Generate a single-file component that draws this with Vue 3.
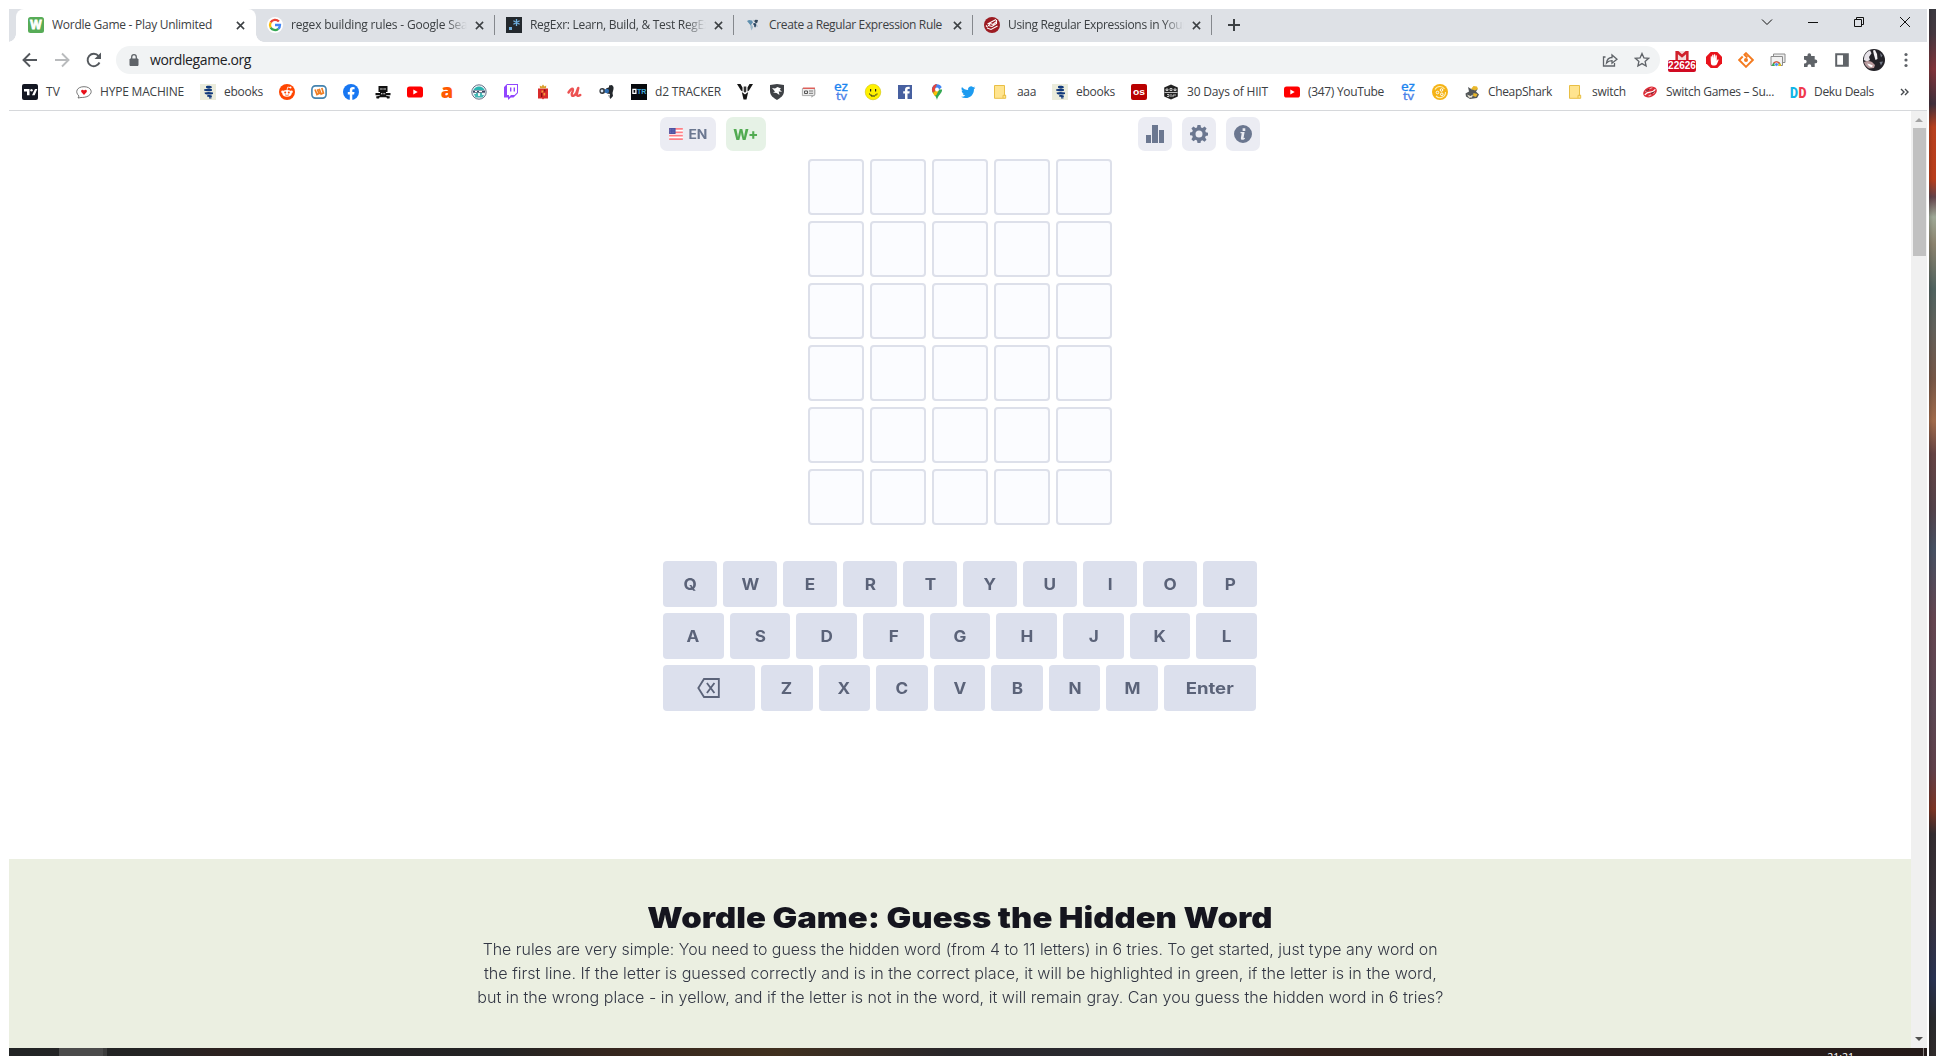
<script setup>
// Adjusts tracking so that a label takes a given width
const vFit = (el, { value }) => {
  el.style.letterSpacing = '0px'
  const n = el.textContent.trim().length
  const gap = (value - el.getBoundingClientRect().width) / n
  el.style.letterSpacing = gap.toFixed(3) + 'px'
}
// Widens the letterforms around their centre to a given width
const vStretch = (el, { value }) => {
  el.style.transform = 'none'
  el.style.transform = `scaleX(${(value / el.getBoundingClientRect().width).toFixed(4)})`
}

const sans = 'font-family="Liberation Sans, sans-serif"'
const youtube = '<rect y="2.6" width="16" height="11" rx="2.6" fill="#f00"/><path d="M6.3 5.6v5l4.4-2.5z" fill="#fff"/>'
const eztv = '<g font-family="Noto Sans, sans-serif"><text x="1" y="7.300" font-size="12.500" fill="#1a84f0" stroke="#1a84f0" stroke-width=".3" textLength="14" lengthAdjust="spacingAndGlyphs">ez</text><text x="3" y="15.800" font-size="11" fill="#4a80e8" stroke="#4a80e8" stroke-width=".3" textLength="11" lengthAdjust="spacingAndGlyphs">tv</text></g>'
const ebooks = '<path fill="#ebecdc" d="M0 0h16v16H0z"/><path d="M6 2.2c4-1 7 .3 5.500 1.700-1.500.7-4 .6-5.500-.1zM4 5.500c2.500-1 5-.8 8-.3v1.600c-3 .8-6 .7-8-.2zM4.500 8.500c3-.9 6-.7 8.500.1v1.400c-3 .8-6 .7-8-.1zM7 11.500c2-.7 4-.4 5 .2v1c-2 .5-4 .4-5-.1zM9 13.300h2.500v1.300H9z" fill="#123a7c"/>'
const folder = '<path d="M1.500 1.500h10v9.800h1.200v3h-11.200z" fill="#ffe48f" stroke="#e9bf45" stroke-width="1"/><path d="M10 14v-2.700h2.500" fill="none" stroke="#e9bf45"/>'

const icons = {
  wordle: `<rect width="16" height="16" rx="2.500" fill="#57ac57"/><text x="8" y="12.300" ${sans} font-size="12" font-weight="700" text-anchor="middle" fill="#fff" stroke="#fff" stroke-width=".8">W</text>`,
  google: '<circle cx="8" cy="8" r="8" fill="#fff"/><g fill="none" stroke-width="2.300"><path d="M11.900 4.600A5 5 0 0 0 3.700 5.400" stroke="#ea4335"/><path d="M3.700 5.400a5.200 5.200 0 0 0 0 5.200" stroke="#fbbc05"/><path d="M3.700 10.600a5 5 0 0 0 7.600 1.200" stroke="#34a853"/><path d="M11.300 11.800A5 5 0 0 0 13 8H8" stroke="#4285f4"/></g>',
  regexr: `<path d="M0 0h16v16H0z" fill="#23282d"/><rect x="3" y="10" width="3" height="3" fill="#70b0e0"/><path d="M10.500 2v7M7.400 3.700l6.200 3.600M13.600 3.700L7.400 7.300" stroke="#70b0e0" stroke-width="1.300"/>`,
  map: '<path d="M2 4l2-1 3 .5 1 2-1.500 1.500-.5 2-1.500-2z" fill="#5f8fae"/><path d="M5.500 8l2 .5.5 2-1.500 3-1-3z" fill="#9db8c8"/><path d="M7.500 3.200l1.500-.4-.6 1.400z" fill="#9db8c8"/><path d="M9 4l1.500-1.200 2.500.2-.6 2.500-1.400 1z" fill="#31475b"/><path d="M8.600 6l2 .3.900 1.600-1.200 2.600-1-.6-.2-1.700-1-1z" fill="#2d4a66"/><path d="M11.500 9l1-.5-.3 1.500z" fill="#5f8fae"/>',
  cisco: '<circle cx="8" cy="8" r="8" fill="#9c1b22"/><path d="M3.500 7l8.500-4.500M4.500 8.800L6 6.500l3 1 4-3.500M12.500 3v3.500L8 9.500 4 8.500M3 11l4 1.500L13.500 9M2 8.500l1.500 1.500" fill="none" stroke="#fff" stroke-width="1.100"/>',
  tv: '<rect width="16" height="16" rx="2" fill="#131722"/><path d="M2 5h5.500v6.200H5V7.500H2zM13 5h2.300l-2.600 6.200H10z" fill="#fff"/><circle cx="9.500" cy="6.200" r="1.200" fill="#fff"/>',
  hype: '<path d="M5 13.500l-3 .5 1-2C-1.500 8 1 2.700 8 2.700s9.500 5.600 4.700 9C10.500 13.300 7 13.500 5 13.500z" fill="#fff" stroke="#555" stroke-width=".8"/><path d="M8 11L5.300 7.900C4.500 6 6.600 4.900 8 6.500 9.400 4.900 11.500 6 10.700 7.900z" fill="#e8101a"/>',
  ebooks,
  reddit: '<circle cx="8" cy="8" r="8" fill="#ff4500"/><ellipse cx="8" cy="9.300" rx="4.700" ry="3.400" fill="#fff"/><circle cx="3.400" cy="7.800" r="1.200" fill="#fff"/><circle cx="12.600" cy="7.800" r="1.200" fill="#fff"/><path d="M8 6l.8-3 2.400.6" fill="none" stroke="#fff" stroke-width=".8"/><circle cx="11.500" cy="3.600" r="1" fill="#fff"/><circle cx="6.200" cy="8.600" r="1" fill="#ff4500"/><circle cx="9.800" cy="8.600" r="1" fill="#ff4500"/><path d="M6 10.800q2 1.300 4 0" fill="none" stroke="#ff4500" stroke-width=".7"/>',
  wykop: '<rect x=".9" y="1.900" width="14.200" height="12.200" rx="3.500" fill="#fff" stroke="#4383af" stroke-width="1.600"/><path d="M4 5.500l2 5 1.900-.9-1.400-4.400M7.900 9.600l2.200-1M8.200 4.800l1.900 5.200 2.300-1-1.600-5" fill="none" stroke="#ef7d22" stroke-width="1.700"/>',
  facebook: '<circle cx="8" cy="8" r="8" fill="#1877f2"/><path d="M6.800 16v-5.600H4.800V8h2V6.300c0-2.200 1.200-3.300 3.100-3.300l1.700.2v2h-1c-1 0-1.300.6-1.300 1.200V8h2.200l-.4 2.400H9.300V16z" fill="#fff"/>',
  pirate: '<path d="M3.500 2h9v6h-9zM.5 9h15v2.200h-15zM5 8h6v4H5zM1 12.500l6-1.200 1 .8 1-.8 6 1.200-.6 2H12l-.5-1.200H4.500L4 14.500H1.600z" fill="#111"/><path d="M5.200 4.500h1.600v1H5.200zM9.200 4.500h1.600v1H9.200zM7.600 4.300h.8v1.500h-.8zM6 9.300h1v1H6zM7.600 9.300h1v1h-1zM9.200 9.300h1v1h-1z" fill="#fff"/>',
  youtube,
  allegro: `<text x="8" y="13.700" font-family="Open Sans, sans-serif" font-size="20" font-weight="800" text-anchor="middle" fill="#ff5a00">a</text>`,
  badge: '<circle cx="8" cy="8" r="7.200" fill="#e8f4f5" stroke="#6b7289" stroke-width="1"/><path d="M2.500 6a6 6 0 0 1 11 0z" fill="#2cb5b2"/><path d="M2 6.500h12v2.200H2z" fill="#3c4765"/><path d="M3 10h2V9h2v3h2V9h2v2h2l-1.500 2.500h-7z" fill="#44b7b5"/><path d="M4 7v1h2V7zM8 7v1h3V7z" fill="#fff"/>',
  twitch: '<path d="M1 3l3-3h11v9l-4.500 4.500H7.800L5 16v-2.500H1z" fill="#9146ff"/><path d="M4 1h10v7.500L11.500 11H8l-2 2v-2H4z" fill="#fff"/><path d="M7 3.500h1.400v4H7zM10.600 3.500H12v4h-1.400z" fill="#9146ff"/>',
  crest: '<path d="M3 4.500h10v10H9l-1 1-1-1H3z" fill="#d92b2b"/><path d="M5 4.200L4.800 1.500 6.500 2.500 8 .6l1.500 1.900 1.700-1L11 4.200z" fill="#d9a12e"/><path d="M6.500 6.500h1.700v2H6.500zM8.500 9h1.700v2.500H8.500z" fill="#f0a23b"/><path d="M6 9h1.300v4H6zM9 5.500h1.500v2H9z" fill="#8a1010"/>',
  udemy: '<path d="M1.500 8.500Q4.500 4 5.600 4.800T4.800 9.500c-.6 3.800 3 2.800 4.700-1l1.600-4.300M11.300 4L10 9.500c-.5 3 1.500 2.800 3.300 1.500" fill="none" stroke="#ec5252" stroke-width="2.400" stroke-linecap="round"/>',
  gun: '<path d="M7 4.500l3-1.200V1.500l3-.5 1.500 2V5l-1 4 .5 3-2.500 3-1-2 .5-3L8 9.500z" fill="#24282d"/><circle cx="3.300" cy="7" r="2.900" fill="#30353b"/><circle cx="3" cy="7" r="1.400" fill="#dce9f5"/><circle cx="7.800" cy="7" r="2.300" fill="#2d6db2"/><path d="M9 11h1.500v3.500z" fill="#9aa0a6"/>',
  dtr: `<path d="M0 0h16v16H0z" fill="#070a0d"/><path d="M1.900 5.400h3v4h-3z" fill="none" stroke="#fff" stroke-width="1.300"/><g ${sans} font-size="7" font-weight="700"><text x="6" y="10" fill="#40a8d8" textLength="9.500" lengthAdjust="spacingAndGlyphs">TR</text></g>`,
  destiny: '<path d="M0 0h3.500l2 3.500v4L4 6.500zM12.500 0H16l-4 6.500-1.500 1v-4zM4.800 8L8 10.500 11.200 8l-1.700 7.500h-3z" fill="#151515"/><path d="M6.700 2.500h2.600v5L8 8.800 6.700 7.500z" fill="#333"/>',
  shield: '<path d="M1 1l7-1 7 1v6c0 5-4 7-7 9-3-2-7-4-7-9z" fill="#3f4246"/><path d="M3 4l3 .5L8.500 3 12 4.500l-1.300 1.300 2.300 2-3.300-.3.800 3.500L7.500 9 4 8.500l2-1z" fill="#fff"/>',
  news: '<path d="M1.400 4.400h12v7.200h-12z" fill="#ececec" stroke="#9a9a9a" stroke-width=".8"/><path d="M2 3.600h12v1.200H2z" fill="#e64c45"/><path d="M13.400 5.500h1v5l-4 3.200v-2.200h3z" fill="#a4a4a4"/><path d="M3.500 7h3v2.500h-3z" fill="none" stroke="#555"/><path d="M8 7h4M8 9.300h4" stroke="#777"/>',
  eztv,
  smiley: '<circle cx="8" cy="8" r="7.800" fill="#fff100" stroke="#c7bb00" stroke-width=".5"/><path d="M5 5h1.200v2.500H5zM10 5h1.200v2.500H10zM4 9.500h1v1h1.500v1h3.500v-1h1.500v-1h1v1h-1v1h-1.500v1H6v-1H5v-1H4z" fill="#222"/>',
  fbsquare: '<path d="M1 1h14v14H1z" fill="#4760a0"/><path d="M8 15V9.500H6.200V7.300H8V5.800c0-2 1-3 3-3h1.700V5h-1.200c-.8 0-1 .4-1 1v1.300h2.200l-.3 2.200h-1.900V15z" fill="#fff"/>',
  pin: '<path d="M2.900 5.500C2.900 9.500 7 11 8 16c1-5 5.100-6.500 5.100-10.500z" fill="#34a853"/><path d="M3 6.500C2.500 3 5 .3 8 .3L6.500 5.500z" fill="#1a73e8"/><path d="M4.200 2L7.500 5.500 4 8.900C2.600 6.800 2.600 4 4.200 2z" fill="#ea4335"/><path d="M4 8.900L11.700 2l-4 8.500-2 1.500z" fill="#fbbc04"/><path d="M8 .3c2 0 4 1.200 4.700 3L8 7.500 5 2C6 .8 7 .3 8 .3z" fill="#4285f4"/><path d="M4.200 2C5.300.7 6.600.3 8 .3L6 4.500z" fill="#ea4335"/><circle cx="8" cy="5.500" r="1.900" fill="#fff"/>',
  twitter: '<g transform="translate(0 1) scale(.6)"><path d="M23.950 4.570a10 10 0 0 1-2.820.77 4.960 4.960 0 0 0 2.160-2.720c-.95.550-2.010.96-3.130 1.180a4.920 4.920 0 0 0-8.380 4.480C7.690 8.090 4.070 6.130 1.640 3.160a4.930 4.930 0 0 0 1.520 6.570 4.900 4.900 0 0 1-2.230-.61v.06a4.920 4.920 0 0 0 3.950 4.830 5 5 0 0 1-2.210.08 4.930 4.930 0 0 0 4.600 3.420A9.870 9.870 0 0 1 0 19.540a13.990 13.990 0 0 0 7.550 2.210c9.050 0 14-7.500 14-13.980l-.02-.63a9.940 9.940 0 0 0 2.420-2.570z" fill="#1d9bf0"/></g>',
  folder,
  lastfm: `<rect width="16" height="16" rx="2" fill="#b90000"/><text x="2" y="11" ${sans} font-size="9.500" font-weight="700" fill="#fff" textLength="12" lengthAdjust="spacingAndGlyphs">os</text>`,
  hex: '<path d="M8 .5l6.800 3v9L8 15.500l-6.800-3v-9z" fill="#222"/><path d="M3 5h2v1.500H3zM7 4.500h2v2H7zM11 5h2v1.500h-2zM1.500 8.500h13M4 10.500h2v2H4M8 10v3M10 11h3M10 13v-2" stroke="#fff" stroke-width=".7" fill="none"/>',
  coin: '<circle cx="8" cy="8" r="8" fill="#f5b316"/><path d="M3 5.500a5.500 5.500 0 0 1 9.500-.5M13.500 8a5.500 5.500 0 0 1-9.500 4" fill="none" stroke="#fff0b8" stroke-width="1.100"/><circle cx="5.500" cy="8.500" r="1.300" fill="none" stroke="#fff" stroke-width="1"/><circle cx="9.500" cy="6" r="1.300" fill="none" stroke="#fff" stroke-width="1"/><circle cx="9.800" cy="10.300" r="1.300" fill="none" stroke="#fff" stroke-width="1"/>',
  shark: '<path d="M1.500 9.500l3.500-2L4 3l4 2.500L11 3l2.500 2.500L12 7.500l3 3-2 3.500-7 1-4-2.500z" fill="#535759"/><path d="M7 5l2.500-3L13 2.500l1 2.500-3 1.500zM9.500 9l4 1-1.500 3-3-1z" fill="#e9b72a"/><path d="M3 10.500l3.500 1.500L9 10.500 8 13.500l-3 .3z" fill="#e8e4d2"/>',
  sswitch: '<g transform="rotate(-25 8 8)"><ellipse cx="8" cy="8" rx="7.200" ry="5" fill="#dc2c37"/><path d="M2 8.500q3-1.500 6-.3t6-.4" fill="none" stroke="#fff" stroke-width="1.200"/><path d="M4 5.500h3M9 5h3M5 11h3M10 10.500h2" stroke="#f7b5b8" stroke-width="1"/></g><path d="M4 7l3-1.500M9 9.500l3-1.500" stroke="#5b2230"/>',
  deku: '<g font-family="Roboto, sans-serif" font-size="15.500" font-weight="900"><text x="0" y="13.500" fill="#12b5e5" textLength="8" lengthAdjust="spacingAndGlyphs">D</text><text x="8.600" y="13.500" fill="#f0394c" textLength="8" lengthAdjust="spacingAndGlyphs">D</text></g>',
}

const tabs = [
  { icon: 'wordle', title: 'Wordle Game - Play Unlimited', w: 160, active: true },
  { icon: 'google', title: 'regex building rules - Google Search', w: 194 },
  { icon: 'regexr', title: 'RegExr: Learn, Build, & Test RegEx', w: 180 },
  { icon: 'map', title: 'Create a Regular Expression Rule', w: 173 },
  { icon: 'cisco', title: 'Using Regular Expressions in Your', w: 179 },
]
const b = (icon, label, w) => ({ icon, label, w })
const bookmarks = [
  b('tv', 'TV', 14), b('hype', 'HYPE MACHINE', 84), b('ebooks', 'ebooks', 39),
  b('reddit'), b('wykop'), b('facebook'), b('pirate'), b('youtube'), b('allegro'), b('badge'),
  b('twitch'), b('crest'), b('udemy'), b('gun'), b('dtr', 'd2 TRACKER', 66),
  b('destiny'), b('shield'), b('news'), b('eztv'), b('smiley'), b('fbsquare'), b('pin'), b('twitter'),
  b('folder', 'aaa', 19), b('ebooks', 'ebooks', 39), b('lastfm'), b('hex', '30 Days of HIIT', 81),
  b('youtube', '(347) YouTube', 76), b('eztv'), b('coin'), b('shark', 'CheapShark', 64),
  b('folder', 'switch', 34), b('sswitch', 'Switch Games – Su...', 108), b('deku', 'Deku Deals', 60),
]
const rows = ['QWERTYUIOP', 'ASDFGHJKL']
const lines = [
  ['The rules are very simple: You need to guess the hidden word (from 4 to 11 letters) in 6 tries. To get started, just type any word on', 955],
  ['the first line. If the letter is guessed correctly and is in the correct place, it will be highlighted in green, if the letter is in the word,', 953],
  ['but in the wrong place - in yellow, and if the letter is not in the word, it will remain gray. Can you guess the hidden word in 6 tries?', 966],
]
</script>

<template>
  <div class="screen">
    <div class="window">
      <header class="tabstrip">
        <div class="lead"></div>
        <div v-for="t in tabs" :key="t.title" class="tab" :class="{ active: t.active }">
          <svg class="ico" viewBox="0 0 16 16" v-html="icons[t.icon]"></svg>
          <div class="title" :class="{ fade: t.w > 175 }"><span v-fit="t.w">{{ t.title }}</span></div>
          <svg class="close" viewBox="0 0 10 10"><path d="M1 1l8 8M9 1L1 9" /></svg>
        </div>
        <svg class="plus" viewBox="0 0 12 12"><path d="M6 0v12M0 6h12" /></svg>
        <div class="controls">
          <svg viewBox="0 0 12 12"><path d="M1 3.500l5 5 5-5" /></svg>
          <svg viewBox="0 0 12 12"><path d="M1 6.500h10" /></svg>
          <svg viewBox="0 0 12 12"><path d="M1.500 3.500h7v7h-7zM3.500 3.500v-2h7v7h-2" /></svg>
          <svg viewBox="0 0 12 12"><path d="M1 1l10 10M11 1L1 11" /></svg>
        </div>
      </header>

      <div class="toolbar">
        <svg class="nav" viewBox="0 0 16 16"><path d="M15 8H2M8 1.500L1.500 8 8 14.500" /></svg>
        <svg class="nav dim" viewBox="0 0 16 16"><path d="M1 8h13M8 1.500L14.500 8 8 14.500" /></svg>
        <svg class="nav" viewBox="0 0 16 16"><path d="M13.500 10.500A6.200 6.200 0 1 1 12.600 4L14 5.500" /><path class="solid" d="M15 .5v6.500H8.500z" /></svg>
        <div class="omnibox">
          <svg class="lock" viewBox="0 0 10 12"><path d="M1 5h8v6.500H1z" fill="#5f6368" stroke="#5f6368" /><path d="M2.700 5V3a2.300 2.300 0 0 1 4.600 0v2" fill="none" stroke="#5f6368" stroke-width="1.300" /></svg>
          <span v-fit="101" class="url">wordlegame.org</span>
          <svg class="tool share" viewBox="0 0 16 16"><path d="M3.500 5H1.500v9h11v-3M4.500 11c.5-4 2.500-5.500 5.500-5.500V3l5 4.200-5 4V8.700c-2.500 0-4 .5-5.500 2.300z" /></svg>
          <svg class="tool" viewBox="0 0 16 16"><path d="M8 1.500l1.900 4.300 4.700.5-3.500 3.100 1 4.600L8 11.600 3.900 14l1-4.600L1.400 6.300l4.700-.5z" /></svg>
        </div>
        <div class="exts">
          <div class="gmail">
            <svg viewBox="0 0 16 11"><path d="M0 0h16v11H0z" fill="#f3dada" /><path d="M0 0h3.500L8 4l4.500-4H16v11h-3V4L8 8.300 3 4v7H0z" fill="#d0202a" /></svg>
            <span class="count">22626</span>
          </div>
          <svg class="e" viewBox="0 0 16 16"><path d="M4.700 0h6.600L16 4.700v6.600L11.300 16H4.700L0 11.300V4.700z" fill="#e8131c" /><path d="M4.700 8V4.500q.7-.7 1.200 0V7l.3-4q.7-.8 1.200 0V6.500L8 2.500q.8-.7 1.200 0v4l.4-3q.8-.7 1.200 0V9l.8-1.500q.8-.4 1 .4L11 12c-1 2-5.300 2-6 0z" fill="#fff" /></svg>
          <svg class="e" viewBox="0 0 16 16"><path d="M6.500 2.700L8 1.200 14.800 8 8 14.800 1.200 8l3.500-3.500M5.800 2l3.500 3.500" fill="none" stroke="#f47b20" stroke-width="1.900" /><circle cx="8" cy="8" r="2" fill="#f47b20" /></svg>
          <svg class="e" viewBox="0 0 16 16"><path d="M3.500 4V2h11.500v8.500h-2" fill="#eee" stroke="#8c8c8c" /><path d="M1 4.500h11.500v9H1z" fill="#f2f2f2" stroke="#8c8c8c" /><path d="M2 14a4.500 4.500 0 0 1 9 0z" fill="#34a853" /><path d="M3 11a4.500 4.500 0 0 1 7 0l-3 1z" fill="#ea4335" /><path d="M10 11a5 5 0 0 1 1 3H8z" fill="#fbbc05" /><circle cx="6.500" cy="12.500" r="1.800" fill="#4285f4" stroke="#fff" stroke-width=".7" /></svg>
          <svg class="e" viewBox="0 0 16 16"><path d="M2 4h3.500V3a1.800 1.800 0 0 1 3.600 0v1h3.600v3.500h.7a1.900 1.900 0 0 1 0 3.800h-.7V15H9.300v-.8a1.900 1.900 0 0 0-3.800 0v.8H2v-3.600h.8a1.800 1.800 0 0 0 0-3.700H2z" fill="#5f6368" /></svg>
          <svg class="e" viewBox="0 0 16 16"><path d="M2.200 2.200h11.600v11.600H2.200z" fill="#fff" stroke="#5f6368" stroke-width="2" /><path d="M9 2h5v12H9z" fill="#5f6368" /></svg>
          <svg class="avatar" viewBox="0 0 22 22"><circle cx="11" cy="11" r="11" fill="#232228" /><path d="M1.500 6.500Q3.500 2.500 7 1.200l1.500 3L6 8l1 3-3 1.500L.8 11z" fill="#e6e2e8" /><path d="M12 1l2 4 .5 5-2 1-1.500-5-1-4.500z" fill="#f4f2f5" /><path d="M1 13q4-2 8 0l3 3-1 3-5 .5Q2 17 1 13z" fill="#b99a9d" /><path d="M4 14.500q3 .2 6 2.200l-1.500 1.500Q5.500 17.500 4 14.500z" fill="#fff" /><path d="M17 4l2.500 2.500-1.500 2zM16.500 13l3.500-.5-2 4z" fill="#747a88" /></svg>
          <svg class="e" viewBox="0 0 16 16" fill="#5f6368"><circle cx="8" cy="2.500" r="1.600" /><circle cx="8" cy="8" r="1.600" /><circle cx="8" cy="13.500" r="1.600" /></svg>
        </div>
      </div>

      <nav class="bookmarks">
        <div v-for="(m, i) in bookmarks" :key="i" class="mark">
          <svg class="ico" viewBox="0 0 16 16" v-html="icons[m.icon]"></svg>
          <div v-if="m.label" class="label" :style="{ width: m.w + 'px' }"><span v-fit="m.w">{{ m.label }}</span></div>
        </div>
        <svg class="more" viewBox="0 0 10 8"><path d="M1 1l3 3-3 3M5 1l3 3-3 3" /></svg>
      </nav>

      <div class="viewport">
        <main class="page">
          <section class="game">
            <div class="topbar">
              <button class="chip lang">
                <svg viewBox="0 0 16 14"><rect width="16" height="14" rx="1.500" fill="#fff" /><path d="M0 0h16v2H0zM0 4h16v2H0zM0 8h16v2H0zM0 12h16v2H0z" fill="#ff8087" /><path d="M0 0h7.500v7H0z" fill="#4a4fa0" /><path d="M1 1.500h5.500M1 3.500h5.500M1 5.500h5.500" stroke="#9297cd" stroke-width=".7" stroke-dasharray="1 1" /></svg>
                <span v-stretch="19">EN</span>
              </button>
              <button class="chip plusword"><span v-stretch="25">W+</span></button>
              <span class="space"></span>
              <button class="chip sq"><svg viewBox="0 0 18 18"><path d="M0 10h5v8H0zM6 0h6v18H6zM13 5h5v13h-5z" /></svg></button>
              <button class="chip sq"><svg viewBox="0 0 18 18"><path fill-rule="evenodd" d="M7.500 0h3l.5 2.500 1.500.6 2.100-1.500 2 2-1.400 2.100.6 1.600 2.200.4v2.900l-2.300.5-.6 1.500 1.400 2.100-2 2-2.100-1.400-1.500.6-.4 2.100h-3L7 15.400l-1.500-.6-2.100 1.400-2-2 1.400-2.100-.6-1.500L0 10.200V7.600l2.200-.5.6-1.500-1.400-2 2-2 2.100 1.500L7 2.500zM9 5.500a3.500 3.500 0 1 0 0 7 3.500 3.500 0 0 0 0-7z" /></svg></button>
              <button class="chip sq"><svg viewBox="0 0 18 18"><path fill-rule="evenodd" d="M9 0a9 9 0 1 1 0 18A9 9 0 0 1 9 0zM8.600 3.300v2.600h2.700V3.300zM6.500 7v1.300h1.200L6.900 13c-.1 1.300.4 1.800 1.500 1.800 1.200 0 2-.6 2.700-1.600l-.8-.5c-.5.6-.8.600-.7 0l1-5.700z" /></svg></button>
            </div>
            <div class="board"><i v-for="n in 30" :key="n"></i></div>
            <div class="keyboard">
              <div v-for="r in rows" :key="r" class="krow">
                <button v-for="k in r" :key="k"><span>{{ k }}</span></button>
              </div>
              <div class="krow last">
                <button class="wide"><svg viewBox="0 0 28 24"><path d="M8 1.200h17.800v21.600H8L1.200 12zM11.500 6l9 12M20.500 6l-9 12" /></svg></button>
                <button v-for="k in 'ZXCVBNM'" :key="k"><span>{{ k }}</span></button>
                <button class="wide enter"><span v-stretch="48">Enter</span></button>
              </div>
            </div>
          </section>
          <section class="about">
            <h1><span v-stretch="625">Wordle Game: Guess the Hidden Word</span></h1>
            <p v-for="l in lines" :key="l[0]"><span v-stretch="l[1]">{{ l[0] }}</span></p>
          </section>
        </main>
        <aside class="scrollbar">
          <svg viewBox="0 0 8 4"><path d="M0 4l4-4 4 4z" fill="#a3a3a3" /></svg>
          <div class="thumb"></div>
          <svg class="down" viewBox="0 0 8 4"><path d="M0 0l4 4 4-4z" fill="#505050" /></svg>
        </aside>
      </div>

      <footer class="taskbar">
        <div class="task"></div><div class="task2"></div>
        <span class="clock">21:21</span>
        <div class="peek"></div>
      </footer>
    </div>
    <div class="wallpaper"></div>
  </div>
</template>

<style>
body { margin: 0; overflow: hidden; background: #fff; }
</style>

<style scoped>
* { box-sizing: border-box; }
svg { flex: none; display: block; }
.screen { width: 1936px; height: 1056px; padding: 9px 0 0 9px; display: flex; gap: 2px; background: #fff; overflow: hidden; font-family: "Open Sans", "Noto Sans", sans-serif; }
.window { width: 1918px; height: 1047px; display: flex; flex-direction: column; }
.wallpaper { width: 7px; height: 1047px; background: linear-gradient(90deg, #0002, #0000 60%), linear-gradient(#3b3940 0, #463840 25px, #81333a 60px, #40303c 95px, #b8401e 118px, #b93d1b 170px, #62434a 188px, #9ea896 208px, #8b826d 235px, #50625f 280px, #62605a 320px, #765646 370px, #a06a4b 412px, #654343 445px, #53424a 500px, #465062 540px, #654550 610px, #5b4753 700px, #60404a 760px, #7c3424 800px, #332c30 825px, #39313a 900px, #293252 970px, #292a2c 1010px, #302b2b 1047px); }

.tabstrip { height: 33px; flex: none; background: #dee1e6; display: flex; }
.lead { width: 7px; }
.tab { width: 239px; height: 33px; display: flex; align-items: center; padding: 0 10px 1px 12px; position: relative; }
.tab::after { content: ""; position: absolute; right: -1px; top: 6px; width: 1px; height: 20px; background: #85888d; }
.tab.active { background: #fff; border-radius: 8px 8px 0 0; width: 240px; margin-right: -1px; z-index: 1; }
.tab.active::before { content: ""; position: absolute; left: -8px; bottom: 0; width: 8px; height: 8px; background: radial-gradient(circle at 0 0, #0000 7.500px, #fff 8px); }
.tab.active::after { right: -8px; top: auto; bottom: 0; width: 8px; height: 8px; background: radial-gradient(circle at 100% 0, #0000 7.500px, #fff 8px); }
.ico { width: 16px; height: 16px; overflow: visible; }
.title { width: 176px; margin-left: 8px; overflow: hidden; font-size: 12px; line-height: 18px; color: #3c4043; white-space: nowrap; }
.title span, .label span, .url, .chip span, .about span, .krow span { display: inline-block; white-space: nowrap; }
.fade { mask-image: linear-gradient(90deg, #000 155px, #0000 176px); }
.close { width: 9px; height: 9px; margin-left: 8px; fill: none; stroke: #3c4043; stroke-width: 1.700; }
.plus { width: 12px; height: 12px; margin: 10px 0 0 17px; stroke: #3c4043; stroke-width: 2; }
.controls { margin-left: auto; display: flex; gap: 34px; padding: 7px 16px 0 0; }
.controls svg { width: 12px; height: 12px; fill: none; stroke: #111; stroke-width: 1; }

.toolbar { height: 37px; flex: none; display: flex; align-items: center; padding: 0 0 1px 13px; }
.nav { width: 16px; height: 16px; margin-right: 16px; fill: none; stroke: #54585d; stroke-width: 1.900; }
.dim { stroke: #b9bbbd; }
.solid { fill: #54585d; stroke: none; }
.omnibox { width: 1544px; height: 28px; margin-left: -2px; border-radius: 14px; background: #f1f3f4; display: flex; align-items: center; padding: 0 10px 0 13px; }
.lock { width: 10px; height: 12px; margin-right: 11px; }
.url { font-size: 14px; line-height: 20px; color: #202124; }
.tool { width: 16px; height: 16px; fill: none; stroke: #5f6368; stroke-width: 1.300; }
.share { margin: 0 16px 0 auto; }
.exts { display: flex; align-items: center; gap: 16px; margin-left: 8px; }
.e { width: 16px; height: 16px; }
.gmail { width: 28px; height: 22px; margin: 3px -6px 0 0; display: flex; flex-direction: column; align-items: center; }
.gmail svg { width: 16px; height: 9px; }
.count { width: 28px; height: 12px; border-radius: 2px; background: #d10a22; color: #fff; font: 700 10px/12px "Liberation Sans", sans-serif; text-align: center; }
.avatar { width: 22px; height: 22px; margin: 0 -3px; }

.bookmarks { height: 32px; flex: none; border-bottom: 1px solid #d6d8db; display: flex; gap: 16px; padding: 5px 0 0 13px; }
.mark { display: flex; gap: 8px; height: 16px; align-items: center; }
.label { font-size: 12px; line-height: 16px; color: #3c4043; white-space: nowrap; }
.more { width: 10px; height: 8px; margin: 4px 17px 0 auto; fill: none; stroke: #45494d; stroke-width: 1.400; }

.viewport { height: 937px; display: flex; }
.page { width: 1902px; }
.game { height: 748px; display: flex; flex-direction: column; align-items: center; padding-top: 6px; font-family: Inter, sans-serif; }
button { border: 0; padding: 0; font-family: inherit; display: flex; align-items: center; justify-content: center; }
.topbar { width: 600px; height: 34px; display: flex; gap: 10px; }
.chip { height: 34px; border-radius: 7px; background: #ebecf3; color: #6b7790; font-size: 13px; font-weight: 700; }
.lang { width: 56px; gap: 5px; padding-right: 1px; }
.lang svg { width: 16px; height: 12px; }
.plusword { width: 40px; background: #e6f2e6; color: #52ab52; font-size: 15px; font-weight: 800; }
.space { flex: 1; }
.sq { width: 34px; }
.sq svg { width: 18px; height: 18px; fill: #6b7790; }
.board { margin-top: 8px; display: grid; grid-template-columns: repeat(5, 56px); gap: 6px; }
.board i { height: 56px; border: 2px solid #dde0ea; border-radius: 4px; background: #fbfcff; }
.keyboard { width: 594px; margin-top: 36px; display: flex; flex-direction: column; gap: 6px; }
.krow { display: flex; gap: 6px; }
.krow button { flex: 1 1 0; height: 46px; border-radius: 4px; background: #dce0ed; color: #5b6379; font-size: 16px; font-weight: 700; }
.krow span { transform: scaleX(1.07); }
.krow.last { width: 593px; }
.krow .wide { flex: 0 0 92px; }
.wide svg { width: 26px; height: 20px; fill: none; stroke: #5b6379; stroke-width: 2.200; }

.about { height: 189px; background: #ebefe1; padding-top: 40px; font-family: Inter, "Open Sans", sans-serif; text-align: center; color: #15151e; }
h1 { margin: 0; font-size: 29px; line-height: 38px; font-weight: 900; }
p { margin: 0; font-size: 15.500px; line-height: 24px; font-weight: 300; color: #333744; }
p:first-of-type { margin-top: 1px; }

.scrollbar { width: 16px; background: #f0f0f0; display: flex; flex-direction: column; align-items: center; padding: 7px 0; }
.scrollbar svg { width: 8px; height: 4px; }
.thumb { width: 13px; height: 128px; margin-top: 6px; background: #c1c1c1; }
.down { margin-top: auto; }

.taskbar { height: 8px; flex: none; display: flex; overflow: hidden; background: linear-gradient(90deg, #222425 0, #242424 150px, #2c211f 210px, #222122 300px, #232323 490px, #35261e 600px, #40301f 770px, #292629 940px, #2a2b31 1150px, #30201b 1300px, #281d1c 1600px, #241a19); }
.task { width: 44px; margin-left: 50px; background: #4b4b4b; }
.task2 { width: 4px; background: #3c3c3c; }
.clock { margin: 3px 69px 0 auto; font-size: 10.500px; line-height: 12px; color: #fff; }
.peek { width: 1px; margin-right: 3px; background: #8a8584; }
</style>
